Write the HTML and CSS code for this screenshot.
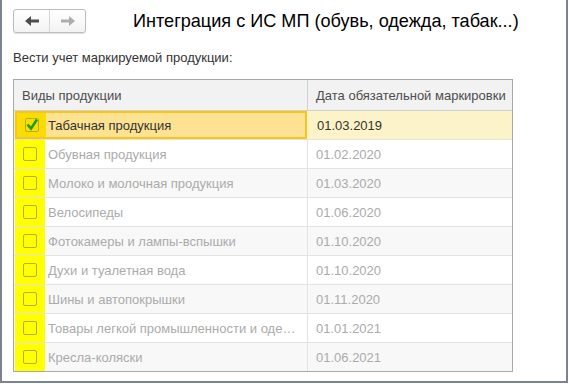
FILE: index.html
```html
<!DOCTYPE html>
<html>
<head>
<meta charset="utf-8">
<link rel="stylesheet" href="styles.css">
</head>
<body>
<div class="window">
  <div class="topbar">
    <div class="nav">
      <div class="navbtn">
        <svg width="14" height="10" viewBox="0 0 14 10"><path d="M0 5 L6 0 L6 3.5 L14 3.5 L14 6.5 L6 6.5 L6 10 Z" fill="#4d4d4d"/></svg>
      </div>
      <div class="navbtn">
        <svg width="14" height="10" viewBox="0 0 14 10"><path d="M14 5 L8 0 L8 3.5 L0 3.5 L0 6.5 L8 6.5 L8 10 Z" fill="#adadad"/></svg>
      </div>
    </div>
    <div class="title">Интеграция с ИС МП (обувь, одежда, табак...)</div>
  </div>
  <div class="label">Вести учет маркируемой продукции:</div>
  <div class="table">
    <div class="row head">
      <div class="c1"><span class="htext">Виды продукции</span></div>
      <div class="c2">Дата обязательной маркировки</div>
    </div>
    <div class="row cur">
      <div class="c1"><div class="cb"><span class="box on"><svg width="14" height="14" viewBox="0 0 14 14"><path d="M2.5 6.5 L6 10.5 L12 1.5" stroke="#1aa01a" stroke-width="2.6" fill="none"/></svg></span></div><span class="name">Табачная продукция</span></div>
      <div class="c2">01.03.2019</div>
    </div>
    <div class="row dis"><div class="c1"><div class="cb"><span class="box"></span></div><span class="name">Обувная продукция</span></div><div class="c2">01.02.2020</div></div>
    <div class="row dis alt"><div class="c1"><div class="cb"><span class="box"></span></div><span class="name">Молоко и молочная продукция</span></div><div class="c2">01.03.2020</div></div>
    <div class="row dis"><div class="c1"><div class="cb"><span class="box"></span></div><span class="name">Велосипеды</span></div><div class="c2">01.06.2020</div></div>
    <div class="row dis alt"><div class="c1"><div class="cb"><span class="box"></span></div><span class="name">Фотокамеры и лампы-вспышки</span></div><div class="c2">01.10.2020</div></div>
    <div class="row dis"><div class="c1"><div class="cb"><span class="box"></span></div><span class="name">Духи и туалетная вода</span></div><div class="c2">01.10.2020</div></div>
    <div class="row dis alt"><div class="c1"><div class="cb"><span class="box"></span></div><span class="name">Шины и автопокрышки</span></div><div class="c2">01.11.2020</div></div>
    <div class="row dis"><div class="c1"><div class="cb"><span class="box"></span></div><span class="name">Товары легкой промышленности и оде…</span></div><div class="c2">01.01.2021</div></div>
    <div class="row dis alt last"><div class="c1"><div class="cb"><span class="box"></span></div><span class="name">Кресла-коляски</span></div><div class="c2">01.06.2021</div></div>
  </div>
</div>
</body>
</html>
```
FILE: styles.css
```css
html, body { margin: 0; padding: 0; background: #fff; }
body { font-family: "Liberation Sans", Arial, sans-serif; }
.window {
  box-sizing: border-box;
  width: 568px;
  height: 383px;
  border: 2px solid #7b8391;
  border-top: none;
  padding: 9px 0 0 11px;
}
.topbar { display: flex; align-items: center; height: 24px; }
.nav {
  display: flex;
  box-sizing: border-box;
  width: 73px;
  height: 24px;
  border: 1px solid #bdbdbd;
  border-radius: 3px;
  background: linear-gradient(#ffffff, #f3f3f3);
  box-shadow: 0 1px 1px rgba(0,0,0,0.12);
}
.navbtn { flex: 1; display: flex; align-items: center; justify-content: center; }
.navbtn + .navbtn { border-left: 1px solid #d6d6d6; }
.title { margin-left: 47px; font-size: 18.1px; color: #000; line-height: 24px; }
.label { margin-top: 17px; font-size: 13px; color: #333; height: 15px; line-height: 15px; }
.table {
  margin-top: 14px;
  box-sizing: border-box;
  width: 500px;
  border: 1px solid #a8a8a8;
}
.row { display: flex; height: 29px; box-sizing: border-box; border-bottom: 1px solid #e3e3e3; font-size: 13px; }
.row.last { border-bottom: none; height: 28px; }
.row.head { height: 31px; background: #f2f2f2; border-bottom: 1px solid #d0d0d0; color: #4d4d4d; }
.c1 { width: 294px; display: flex; align-items: center; box-sizing: border-box; border-right: 1px solid #e3e3e3; }
.c2 { flex: 1; display: flex; align-items: center; padding-left: 8px; }
.head .c1 { border-right: 1px solid #d0d0d0; }
.htext { padding-left: 8px; }
.cb { width: 30px; margin-left: 1px; align-self: stretch; background: #ffff00; display: flex; align-items: center; justify-content: center; }
.box { width: 14px; height: 14px; box-sizing: border-box; border: 1px solid #b5ac2a; border-radius: 2px; display: block; position: relative; }
.box svg { position: absolute; left: -1px; top: -1px; }
.name { padding-left: 3px; white-space: nowrap; }
.dis { color: #ababab; }
.alt { background: #f8f8f8; }
.row.cur { background: #fdf3c9; color: #333; }
.cur .c1 {
  background: #fde391;
  border: 2px solid #f7c51c;
  margin: 0 2px 0 1px;
  width: 292px;
}
.cur .cb { margin-left: 0; background: #fbdc00; width: 29px; }
.cur .name { padding-left: 2px; }
```
